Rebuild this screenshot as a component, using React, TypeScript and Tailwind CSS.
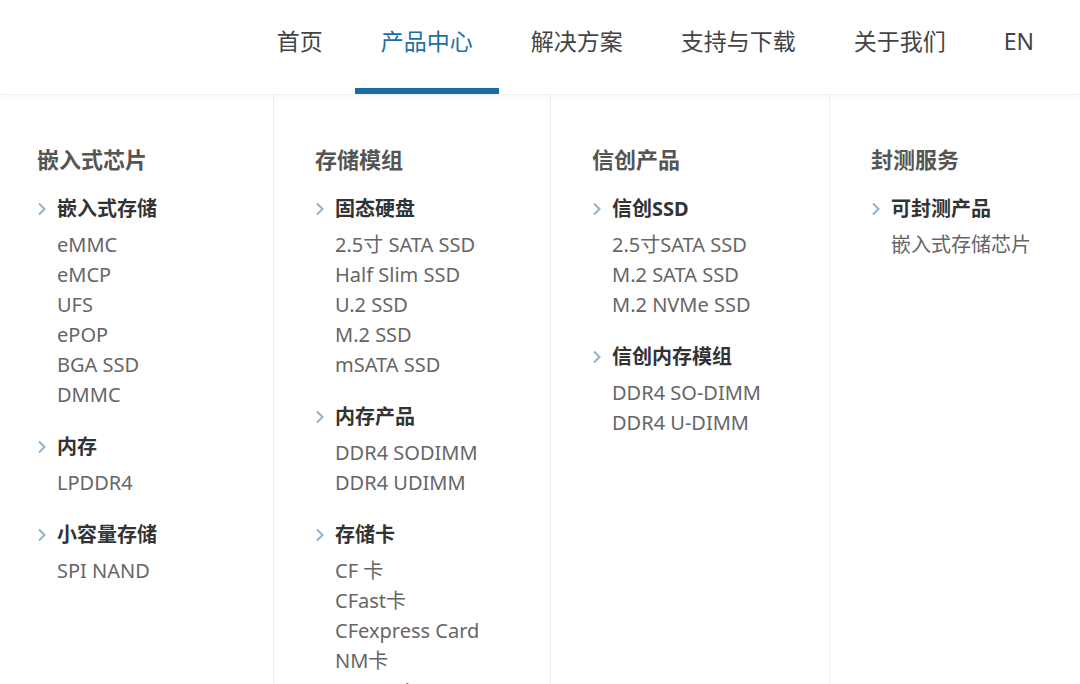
import React from "react";

type Group = { title: string; items: string[] };
type Column = { title: string; groups: Group[]; width: string };

const NAV = ["首页", "产品中心", "解决方案", "支持与下载", "关于我们", "EN"];

const COLUMNS: Column[] = [
  {
    title: "嵌入式芯片",
    width: "w-[273px]",
    groups: [
      { title: "嵌入式存储", items: ["eMMC", "eMCP", "UFS", "ePOP", "BGA SSD", "DMMC"] },
      { title: "内存", items: ["LPDDR4"] },
      { title: "小容量存储", items: ["SPI NAND"] },
    ],
  },
  {
    title: "存储模组",
    width: "w-[277px]",
    groups: [
      { title: "固态硬盘", items: ["2.5寸 SATA SSD", "Half Slim SSD", "U.2 SSD", "M.2 SSD", "mSATA SSD"] },
      { title: "内存产品", items: ["DDR4 SODIMM", "DDR4 UDIMM"] },
      { title: "存储卡", items: ["CF 卡", "CFast卡", "CFexpress Card", "NM卡", "SD Card"] },
    ],
  },
  {
    title: "信创产品",
    width: "w-[279px]",
    groups: [
      { title: "信创SSD", items: ["2.5寸SATA SSD", "M.2 SATA SSD", "M.2 NVMe SSD"] },
      { title: "信创内存模组", items: ["DDR4 SO-DIMM", "DDR4 U-DIMM"] },
    ],
  },
  {
    title: "封测服务",
    width: "flex-1",
    groups: [{ title: "可封测产品", items: ["嵌入式存储芯片"] }],
  },
];

/* ── chevron ── */
function Chevron() {
  return (
    <svg width="10" height="16" viewBox="0 0 10 16" className="shrink-0">
      <path d="M2 2.5 L7.5 8 L2 13.5" fill="none" stroke="#8fb3cc" strokeWidth="2" />
    </svg>
  );
}

function MenuColumn({ col, first }: { col: Column; first: boolean }) {
  return (
    <div
      className={`${col.width} ${first ? "pl-[37px]" : "pl-[41px] border-l border-[#efefef]"} pt-[48px] shrink-0`}
    >
      <h2 className="text-[22px] leading-[32px] font-bold text-[#555]">{col.title}</h2>
      <div className="mt-[19px] flex flex-col gap-[22px]">
        {col.groups.map((g) => (
          <div key={g.title}>
            <div className="flex items-center gap-[10px] h-[30px]">
              <Chevron />
              <span className="text-[20px] font-bold text-[#333]">{g.title}</span>
            </div>
            <ul className="mt-[6px] pl-[20px]">
              {g.items.map((it) => (
                <li key={it} className="text-[20px] leading-[30px] text-[#666] whitespace-nowrap">
                  {it}
                </li>
              ))}
            </ul>
          </div>
        ))}
      </div>
    </div>
  );
}

export default function App() {
  return (
    <div
      className="w-[1080px] h-[684px] overflow-hidden bg-white flex flex-col"
      style={{ fontFamily: '"Noto Sans", "Noto Sans CJK SC", sans-serif' }}
    >
      <header className="h-[95px] shrink-0 flex justify-end pr-[20px] gap-[6px] border-b border-[#f0f0f0] shadow-[0_2px_6px_rgba(0,0,0,0.04)] relative z-10">
        {NAV.map((n) => {
          const active = n === "产品中心";
          return (
            <div
              key={n}
              className={`h-full px-[26px] pt-[25px] box-border text-[23px] leading-[32px] whitespace-nowrap ${
                active ? "text-[#1f6fa6] border-b-[6px] border-[#1a6aa5]" : "text-[#444]"
              }`}
            >
              {n}
            </div>
          );
        })}
      </header>
      <main className="flex flex-1">
        {COLUMNS.map((c, i) => (
          <MenuColumn key={c.title} col={c} first={i === 0} />
        ))}
      </main>
    </div>
  );
}
